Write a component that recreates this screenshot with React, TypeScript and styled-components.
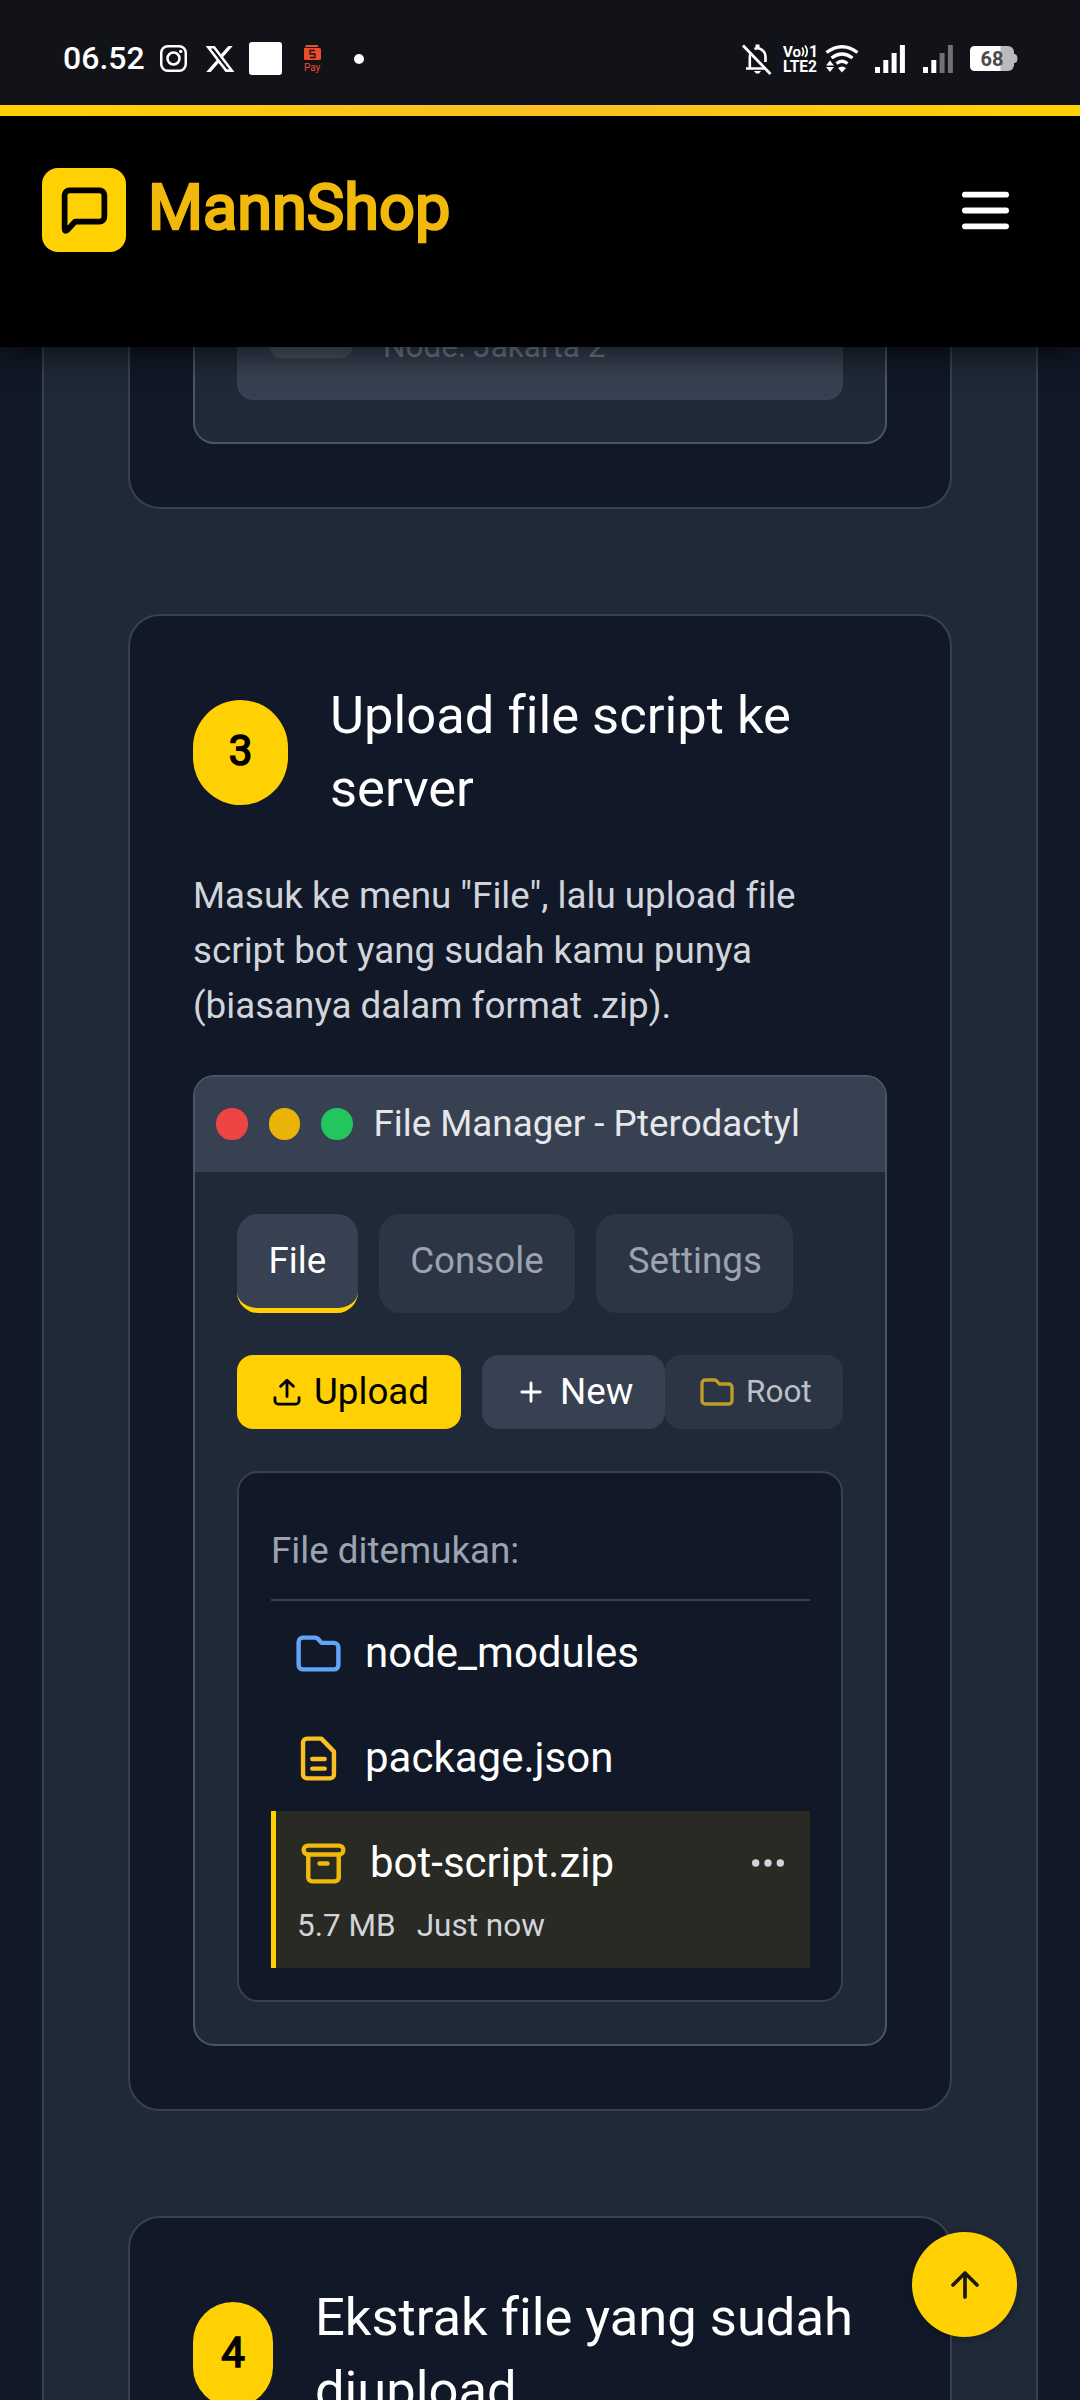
import React from "react";
import styled, { createGlobalStyle } from "styled-components";

const GlobalStyle = createGlobalStyle`
  *, *::before, *::after { box-sizing: border-box; }
  body { margin: 0; background: #111827; font-family: Roboto, "Noto Sans", sans-serif; color: #fff; }
  body, button { font-variant-ligatures: none; }
  svg { display: block; flex: none; }
  h1, h2, p { margin: 0; font-weight: 400; }
`;

const Page = styled.div`
  position: relative;
  display: flex;
  flex-direction: column;
  width: 1080px;
  height: 2400px;
  overflow: hidden;
  background: #111827;
`;

/* ---------- status bar ---------- */
const StatusBar = styled.div`
  flex: none;
  display: flex;
  align-items: center;
  justify-content: space-between;
  height: 105px;
  padding: 12px 62px 0 63px;
  background: #121318;
`;
const StatusGroup = styled.div`
  display: flex;
  align-items: center;
`;
const Clock = styled.span`
  width: 97px;
  padding-bottom: 2px;
  font-size: 32px;
  font-weight: 500;
  line-height: 36px;
`;
const XMark = styled.svg`
  margin-left: 17px;
`;
const WhiteTile = styled.span`
  width: 33px;
  height: 33px;
  margin: 0 21px 0 13px;
  border-radius: 3px;
  background: #fff;
`;
const Dot = styled.span`
  width: 10px;
  height: 10px;
  margin-left: 31px;
  border-radius: 50%;
  background: #fff;
`;
const Indicator = styled.span<{ $before?: number }>`
  flex: none;
  margin-left: ${(p) => p.$before ?? 0}px;
`;

/* ---------- header ---------- */
const Accent = styled.div`
  flex: none;
  position: relative;
  z-index: 3;
  height: 11px;
  background: linear-gradient(90deg, #ffd103, #fbbf24, #ffd103);
`;
const Header = styled.header`
  flex: none;
  position: relative;
  z-index: 2;
  display: flex;
  align-items: flex-start;
  justify-content: space-between;
  height: 231px;
  padding: 52px 63px 0 42px;
  background: #000;
  box-shadow: 0 10px 26px rgba(0, 0, 0, 0.55);
`;
const Brand = styled.div`
  display: flex;
  align-items: center;
  gap: 22px;
`;
const LogoTile = styled.div`
  display: grid;
  place-items: center;
  width: 84px;
  height: 84px;
  border-radius: 16px;
  background: #ffd103;
`;
const BrandName = styled.h1`
  padding-bottom: 5px;
  font-size: 63px;
  line-height: 74px;
  color: #f0b90b;
  -webkit-text-stroke: 2.6px #f0b90b;
`;
const MenuButton = styled.button`
  display: grid;
  place-items: center;
  width: 63px;
  height: 84px;
  padding: 0;
  border: 0;
  background: none;
`;

/* ---------- steps ---------- */
const Main = styled.main`
  flex: 1;
  min-height: 0;
  padding: 0 42px;
  overflow: hidden;
`;
const Panel = styled.section`
  display: flex;
  flex-direction: column;
  gap: 105px;
  height: 2053px;
  padding: 0 84px;
  border: 2px solid #374151;
  border-width: 0 2px;
  background: #1f2937;
`;
const Card = styled.article<{ $cut?: boolean }>`
  flex: none;
  padding: 63px;
  border: 2px solid #374151;
  border-radius: 32px;
  background: #111827;
  ${(p) => p.$cut && `height: 162px; padding-top: 0; border-top: 0; border-radius: 0 0 32px 32px;`}
`;
const StepHead = styled.div`
  display: flex;
  align-items: center;
  gap: 42px;
  margin-bottom: 43px;
`;
const StepBadge = styled.span<{ $w: number }>`
  flex: none;
  display: grid;
  place-items: center;
  width: ${(p) => p.$w}px;
  height: 105px;
  padding-bottom: 4px;
  border-radius: 999px;
  background: #ffd103;
  color: #000;
  font-size: 42px;
  line-height: 63px;
  -webkit-text-stroke: 1.6px #000;
`;
const StepTitle = styled.h2`
  font-size: 52.5px;
  line-height: 73px;
`;
const StepText = styled.p`
  margin-bottom: 42px;
  font-size: 36.75px;
  line-height: 55.1px;
  color: #d1d5db;
`;

/* ---------- mock window ---------- */
const Window = styled.div<{ $cut?: boolean }>`
  overflow: hidden;
  border: 2px solid #4b5563;
  border-radius: 21px;
  background: #1f2937;
  ${(p) => p.$cut && `height: 97px; border-top: 0; border-radius: 0 0 21px 21px; padding: 0 42px;`}
`;
const ServerRow = styled.div`
  display: flex;
  align-items: flex-start;
  gap: 31px;
  height: 53px;
  padding-left: 33px;
  border-radius: 0 0 16px 16px;
  background: #374151;
`;
const ServerIcon = styled.span`
  width: 82px;
  height: 11px;
  border-radius: 0 0 16px 16px;
  background: #4b5563;
`;
const ServerNode = styled.span`
  margin-top: -21px;
  font-size: 31.5px;
  line-height: 42px;
  color: #787f8c;
`;
const TitleBar = styled.div`
  display: flex;
  align-items: center;
  gap: 21px;
  height: 95px;
  padding: 0 21px 2px;
  background: #374151;
  font-size: 36.75px;
  color: #e5e7eb;
`;
const Light = styled.span<{ $c: string }>`
  width: 31.5px;
  height: 31.5px;
  border-radius: 50%;
  background: ${(p) => p.$c};
`;
const WindowBody = styled.div`
  padding: 42px;
`;
const Tabs = styled.div`
  display: flex;
  gap: 21px;
  margin-bottom: 42px;
`;
const Tab = styled.button<{ $active?: boolean }>`
  height: 99px;
  padding: 0 31.5px;
  border: 0 solid ${(p) => (p.$active ? "#ffd103" : "transparent")};
  border-bottom-width: 5px;
  border-radius: 21px;
  background: ${(p) => (p.$active ? "#374151" : "#2b3544")};
  color: ${(p) => (p.$active ? "#fff" : "#9ca3af")};
  font-family: Roboto, sans-serif;
  font-size: 36.75px;
  line-height: 52px;
`;
const Toolbar = styled.div`
  display: flex;
  margin-bottom: 42px;
`;
const Tool = styled.button<{ $kind: "primary" | "plain" | "path"; $w: number }>`
  display: flex;
  align-items: center;
  width: ${(p) => p.$w}px;
  height: 74px;
  padding: 0 0 0 32px;
  border: 0;
  border-radius: 16px;
  white-space: nowrap;
  font-family: Roboto, sans-serif;
  font-size: 36.75px;
  line-height: 52px;
  ${(p) =>
    ({
      primary: "margin-right: 21px; padding-left: 33px; background: #ffd103; color: #000; gap: 10px;",
      plain: "background: #374151; color: #fff; gap: 12px;",
      path: "background: #2b3544; color: #bcc0c7; gap: 9px; font-size: 31.5px;",
    })[p.$kind]}
`;
const FileList = styled.div`
  height: 531px;
  padding: 32px 31px 32px 32px;
  border: 2px solid #374151;
  border-radius: 21px;
  background: #111827;
`;
const ListCaption = styled.div`
  height: 96px;
  padding-top: 20px;
  border-bottom: 2px solid #374151;
  font-size: 36.75px;
  line-height: 52px;
  color: #9ca3af;
`;
const FileItem = styled.div<{ $selected?: boolean }>`
  height: ${(p) => (p.$selected ? 157 : 105)}px;
  padding: 0 21px;
  ${(p) => p.$selected && "border-left: 5px solid #ffd103; background: #292a23;"}
`;
const FileLine = styled.div`
  display: flex;
  align-items: center;
  gap: 20px;
  height: 104px;
  font-size: 42px;
  line-height: 63px;
`;
const FileName = styled.span`
  padding-bottom: 1px;
`;
const More = styled.span`
  margin-left: auto;
`;
const FileMeta = styled.div`
  display: flex;
  gap: 21px;
  margin-top: -10px;
  font-size: 31.5px;
  line-height: 42px;
  color: #d1d5db;
`;
const ToTop = styled.button`
  position: absolute;
  z-index: 3;
  right: 63px;
  bottom: 63px;
  display: grid;
  place-items: center;
  width: 105px;
  height: 105px;
  padding: 0;
  border: 0;
  border-radius: 50%;
  background: #ffd103;
  box-shadow: 0 2px 8px rgba(0, 0, 0, 0.2);
`;

/* ---------- icons ---------- */
const line = (color: string, w = 2) => ({
  fill: "none",
  stroke: color,
  strokeWidth: w,
  strokeLinecap: "round" as const,
  strokeLinejoin: "round" as const,
});

const FolderIcon = ({ size, color }: { size: number; color: string }) => (
  <svg width={size} height={size} viewBox="0 0 24 24" {...line(color)}>
    <path d="M5 4.800h5.500c.5 0 .9.200 1.200.500L13.400 7.200H19a2 2 0 0 1 2 2v8a2 2 0 0 1-2 2H5a2 2 0 0 1-2-2V6.800a2 2 0 0 1 2-2z" />
  </svg>
);
const FileIcon = () => (
  <svg width="53" height="53" viewBox="0 0 24 24" {...line("#fbbf24")}>
    <path d="M6.800 3H13.300L19 8.900V19.200A1.800 1.800 0 0 1 17.200 21H6.800A1.800 1.800 0 0 1 5 19.200V4.800A1.800 1.800 0 0 1 6.800 3zM9.200 12.200h5.600M9.200 16.600h5.600" />
  </svg>
);
const ArchiveIcon = () => (
  <svg width="53" height="53" viewBox="0 0 24 24" {...line("#f0b90b")}>
    <rect x="3" y="3.900" width="18" height="4" rx="2" />
    <path d="M5.100 8v10.300a1.800 1.800 0 0 0 1.800 1.800h10.200a1.800 1.800 0 0 0 1.800-1.800V8M10.200 12h3.600" />
  </svg>
);

const InstagramIcon = () => (
  <svg width="27" height="27" viewBox="0 0 27 27" fill="none" stroke="#fff" strokeWidth="2.500">
    <rect x="1.250" y="1.250" width="24.500" height="24.500" rx="6.500" />
    <circle cx="13.500" cy="13.500" r="6" />
    <circle cx="20.700" cy="6.400" r="1.700" fill="#fff" stroke="none" />
  </svg>
);
const XIcon = () => (
  <XMark width="32" height="32" viewBox="0 0 24 24" fill="#fff">
    <path d="M18.244 2.250h3.308l-7.227 8.260 8.502 11.240H16.170l-5.214-6.817L4.990 21.750H1.680l7.730-8.835L1.254 2.250H8.080l4.713 6.231zm-1.161 17.520h1.833L7.084 4.126H5.117z" />
  </XMark>
);
const PayIcon = () => (
  <svg width="20" height="32" viewBox="0 0 20 32">
    <path d="M2 4.500L3 2h12v2H5zM1 5h15.500q1.500 0 1.500 1.500v9q0 1.500-1.500 1.500h-14Q1 17 1 15.500z" fill="#ee4d2d" />
    <path d="M12 7.500H7v3.500h5v3.500H7" fill="none" stroke="#1a1414" strokeWidth="1.300" />
    <text x="1" y="27.500" fontSize="10" fontFamily="Roboto" fill="#ee4d2d">Pay</text>
  </svg>
);

const BellOffIcon = () => (
  <svg width="32" height="32" viewBox="0 0 32 32" fill="none" stroke="#fff" strokeWidth="2.600">
    <path d="M5 25.500h20M8.800 25V14q0-2.500 1-4.200M13.500 6.200q3-2 6.200 0Q24.500 8.500 24.500 14v5" />
    <path d="M16.500 1.500v4" strokeWidth="4" />
    <path d="M13 28h7l-2 2.500h-3z" fill="#fff" stroke="none" />
    <path d="M2 2.500L29.500 31" strokeWidth="2.800" />
  </svg>
);
const VolteIcon = () => (
  <svg width="40" height="36" viewBox="-2 -3 40 36">
    <g fill="#fff" fontFamily="Roboto" fontWeight="700">
      <text x="0" y="13" fontSize="15" textLength="18" lengthAdjust="spacingAndGlyphs">Vo</text>
      <text x="26" y="13" fontSize="16">1</text>
      <text x="0" y="28" fontSize="16" textLength="34" lengthAdjust="spacingAndGlyphs">LTE2</text>
    </g>
    <path d="M19 3.500q3 4 0 8.500M22 1.500q4.500 6 0 11.500" fill="none" stroke="#fff" strokeWidth="1.700" />
  </svg>
);
const WifiIcon = () => (
  <svg width="34" height="28" viewBox="0 0 34 28">
    <g fill="none" stroke="#fff" strokeWidth="3.300">
      <path d="M1.500 7.500Q17 -4 32.500 7.500" />
      <path d="M6.500 13Q17 5 27.500 13" />
      <path d="M11.500 18.500Q17 14 22.500 18.500" />
    </g>
    <path d="M13 23q4-3 8 0l-4 4.500zM1 20.500l4-5 4 5zM1 22h8l-4 5z" fill="#fff" />
  </svg>
);
const Signal = ({ on }: { on: number }) => (
  <svg width="30" height="28" viewBox="0 0 30 28">
    {[6, 13, 20, 28].map((h, i) => (
      <rect key={h} x={i * 8.3} y={28 - h} width="5" height={h} fill={i < on ? "#fff" : "#707174"} />
    ))}
  </svg>
);
const BatteryIcon = () => (
  <svg width="48" height="25" viewBox="0 0 48 25">
    <rect width="44" height="25" rx="6" fill="#b9babd" />
    <path d="M44 8q3.500 0 3.500 4.500T44 17z" fill="#b9babd" />
    <path d="M5 0H30.500V25H5Q0 25 0 20V5Q0 0 5 0z" fill="#fff" />
    <text x="22" y="19.500" textAnchor="middle" fontSize="20" fontWeight="700" fontFamily="Roboto" fill="#4a4a4c">68</text>
  </svg>
);

export default function App() {
  return (
    <Page>
      <GlobalStyle />
      <StatusBar>
        <StatusGroup>
          <Clock>06.52</Clock>
          <InstagramIcon />
          <XIcon />
          <WhiteTile />
          <PayIcon />
          <Dot />
        </StatusGroup>
        <StatusGroup>
          <Indicator><BellOffIcon /></Indicator>
          <Indicator $before={8}><VolteIcon /></Indicator>
          <Indicator $before={4}><WifiIcon /></Indicator>
          <Indicator $before={16}><Signal on={4} /></Indicator>
          <Indicator $before={18}><Signal on={2} /></Indicator>
          <Indicator $before={17}><BatteryIcon /></Indicator>
        </StatusGroup>
      </StatusBar>
      <Accent />
      <Header>
        <Brand>
          <LogoTile>
            <svg width="53" height="53" viewBox="0 0 24 24" {...line("#000", 2.6)}>
              <path d="M5.200 2.900h13.600a2.200 2.200 0 0 1 2.200 2.200v9.700a2.200 2.200 0 0 1-2.200 2.200H7.800L4.200 20.900q-1.200.800-1.200-.600V5.100a2.200 2.200 0 0 1 2.200-2.200z" />
            </svg>
          </LogoTile>
          <BrandName>MannShop</BrandName>
        </Brand>
        <MenuButton aria-label="Menu">
          <svg width="63" height="63" viewBox="0 0 63 63" {...line("#fff", 5.8)}>
            <path d="M10.900 15.700h41.200M10.900 31.500h41.200M10.900 47.300h41.200" />
          </svg>
        </MenuButton>
      </Header>
      <Main>
        <Panel>
          <Card $cut>
            <Window $cut>
              <ServerRow>
                <ServerIcon />
                <ServerNode>Node: Jakarta 2</ServerNode>
              </ServerRow>
            </Window>
          </Card>
          <Card>
            <StepHead>
              <StepBadge $w={95}>3</StepBadge>
              <StepTitle>Upload file script ke server</StepTitle>
            </StepHead>
            <StepText>Masuk ke menu "File", lalu upload file script bot yang sudah kamu punya (biasanya dalam format .zip).</StepText>
            <Window>
              <TitleBar>
                <Light $c="#ef4444" />
                <Light $c="#eab308" />
                <Light $c="#22c55e" />
                <span>File Manager - Pterodactyl</span>
              </TitleBar>
              <WindowBody>
                <Tabs>
                  <Tab $active>File</Tab>
                  <Tab>Console</Tab>
                  <Tab>Settings</Tab>
                </Tabs>
                <Toolbar>
                  <Tool $kind="primary" $w={224}>
                    <svg width="34" height="34" viewBox="0 0 24 24" {...line("#000")}>
                      <path d="M12 15.200V4M7.500 8L12 3.700 16.500 8M3.500 16v2.200a2.300 2.300 0 0 0 2.300 2.300h12.400a2.300 2.300 0 0 0 2.300-2.300V16" />
                    </svg>
                    Upload
                  </Tool>
                  <Tool $kind="plain" $w={183}>
                    <svg width="34" height="34" viewBox="0 0 24 24" {...line("#fff")}>
                      <path d="M12 5.500v13M5.500 12h13" />
                    </svg>
                    New
                  </Tool>
                  <Tool $kind="path" $w={178}>
                    <FolderIcon size={40} color="#bd9f28" />
                    Root
                  </Tool>
                </Toolbar>
                <FileList>
                  <ListCaption>File ditemukan:</ListCaption>
                  <FileItem>
                    <FileLine>
                      <FolderIcon size={53} color="#60a5fa" />
                      <FileName>node_modules</FileName>
                    </FileLine>
                  </FileItem>
                  <FileItem>
                    <FileLine>
                      <FileIcon />
                      <FileName>package.json</FileName>
                    </FileLine>
                  </FileItem>
                  <FileItem $selected>
                    <FileLine>
                      <ArchiveIcon />
                      <FileName>bot-script.zip</FileName>
                      <More>
                        <svg width="42" height="42" viewBox="0 0 42 42" fill="#d1d5db">
                          <circle cx="8.700" cy="21" r="3.700" />
                          <circle cx="21" cy="21" r="3.700" />
                          <circle cx="33.300" cy="21" r="3.700" />
                        </svg>
                      </More>
                    </FileLine>
                    <FileMeta>
                      <span>5.7 MB</span>
                      <span>Just now</span>
                    </FileMeta>
                  </FileItem>
                </FileList>
              </WindowBody>
            </Window>
          </Card>
          <Card>
            <StepHead>
              <StepBadge $w={80}>4</StepBadge>
              <StepTitle>Ekstrak file yang sudah diupload</StepTitle>
            </StepHead>
          </Card>
        </Panel>
      </Main>
      <ToTop aria-label="Ke atas">
        <svg width="42" height="42" viewBox="0 0 42 42" {...line("#1a1a14", 3.7)}>
          <path d="M21 33V9.500M9 21L21 9l12 12" />
        </svg>
      </ToTop>
    </Page>
  );
}
